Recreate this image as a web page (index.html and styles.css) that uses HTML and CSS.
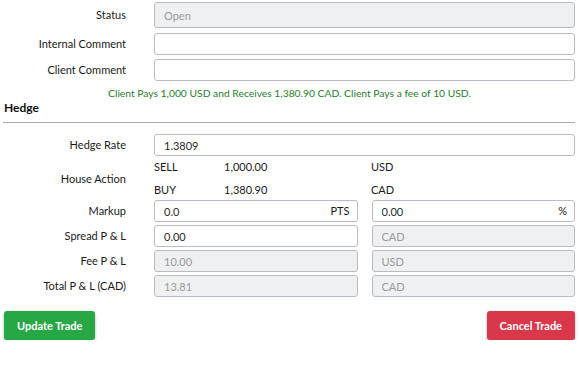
FILE: index.html
```html
<!DOCTYPE html>
<html lang="en">
<head>
    <meta charset="UTF-8">
    <meta name="viewport" content="width=device-width, initial-scale=1.0">
    <title>Edit Trade</title>
    <link rel="stylesheet" href="styles.css">
</head>
<body>
    <div class="trade-form">
        <div class="form-row status-row">
            <label class="form-label">Status</label>
            <input class="form-input tall" type="text" value="Open" disabled>
        </div>
        <div class="form-row">
            <label class="form-label">Internal Comment</label>
            <input class="form-input" type="text">
        </div>
        <div class="form-row">
            <label class="form-label">Client Comment</label>
            <input class="form-input" type="text">
        </div>

        <div class="summary">Client Pays 1,000 USD and Receives 1,380.90 CAD. Client Pays a fee of 10 USD.</div>

        <h2 class="section-title">Hedge</h2>
        <hr class="divider">

        <div class="form-row hedge-rate">
            <label class="form-label">Hedge Rate</label>
            <input class="form-input" type="text" value="1.3809">
        </div>

        <div class="form-row house-action">
            <label class="form-label">House Action</label>
            <div class="action-grid">
                <span>SELL</span><span>1,000.00</span><span>USD</span>
                <span>BUY</span><span>1,380.90</span><span>CAD</span>
            </div>
        </div>

        <div class="form-row pair-row">
            <label class="form-label">Markup</label>
            <div class="pair">
                <div class="input-group">
                    <input class="form-input" type="text" value="0.0">
                    <span class="suffix">PTS</span>
                </div>
                <div class="input-group">
                    <input class="form-input" type="text" value="0.00">
                    <span class="suffix">%</span>
                </div>
            </div>
        </div>
        <div class="form-row pair-row">
            <label class="form-label">Spread P &amp; L</label>
            <div class="pair">
                <input class="form-input" type="text" value="0.00">
                <input class="form-input" type="text" value="CAD" disabled>
            </div>
        </div>
        <div class="form-row pair-row">
            <label class="form-label">Fee P &amp; L</label>
            <div class="pair">
                <input class="form-input" type="text" value="10.00" disabled>
                <input class="form-input" type="text" value="USD" disabled>
            </div>
        </div>
        <div class="form-row pair-row">
            <label class="form-label">Total P &amp; L (CAD)</label>
            <div class="pair">
                <input class="form-input" type="text" value="13.81" disabled>
                <input class="form-input" type="text" value="CAD" disabled>
            </div>
        </div>

        <div class="actions">
            <button class="btn btn-update">Update Trade</button>
            <button class="btn btn-cancel">Cancel Trade</button>
        </div>
    </div>
</body>
</html>
```

FILE: styles.css
```css
body {
    margin: 0;
    padding: 2px 4px 0 4px;
    font-family: Lato, 'Noto Sans', sans-serif;
    font-size: 11px;
    line-height: 14px;
    color: #1a1a1a;
    background: #fff;
}

.form-row {
    display: grid;
    grid-template-columns: 122px 1fr;
    column-gap: 28px;
    align-items: center;
    margin-bottom: 4px;
}

.status-row {
    margin-bottom: 5px;
}

.form-label {
    text-align: right;
}

.form-input {
    box-sizing: border-box;
    width: 100%;
    height: 22px;
    margin: 0;
    padding: 0 9px;
    border: 1px solid #b9bdc3;
    border-radius: 3px;
    font-family: inherit;
    font-size: 11px;
    color: #2a2a2a;
    background: #fff;
}

.form-input.tall {
    height: 26px;
}

.form-input:disabled {
    background: #eff0f2;
    color: #9a9a9a;
}

.summary {
    text-align: center;
    color: #1f7d2e;
    font-size: 10.3px;
    line-height: 13px;
    margin-top: 6px;
}

.section-title {
    margin: 0;
    padding-top: 1px;
    font-size: 12px;
    font-weight: 700;
    line-height: 14px;
    color: #111;
}

.divider {
    margin: 7px 0 11px -1px;
    border: 0;
    border-top: 1px solid #a9a9a9;
}

.hedge-rate {
    margin-bottom: 0;
}

.house-action {
    margin-bottom: -1px;
}

.action-grid {
    display: grid;
    grid-template-columns: 70px 1fr 204px;
    grid-auto-rows: 22px;
    row-gap: 1px;
    align-items: center;
}

.pair {
    display: grid;
    grid-template-columns: 1fr 1fr;
    column-gap: 14px;
}

.pair-row {
    margin-bottom: 3px;
}

.input-group {
    position: relative;
}

.suffix {
    position: absolute;
    right: 8px;
    top: 4px;
    color: #1a1a1a;
}

.actions {
    display: flex;
    justify-content: space-between;
    margin-top: 14px;
}

.btn {
    height: 29px;
    padding: 0 13px;
    border: none;
    border-radius: 3px;
    font-family: inherit;
    font-size: 11px;
    font-weight: 700;
    color: #fff;
    cursor: pointer;
    box-shadow: 0 2px 3px rgba(0, 0, 0, 0.3);
}

.btn-update {
    background: #28a745;
}

.btn-cancel {
    background: #d9374a;
}
```
